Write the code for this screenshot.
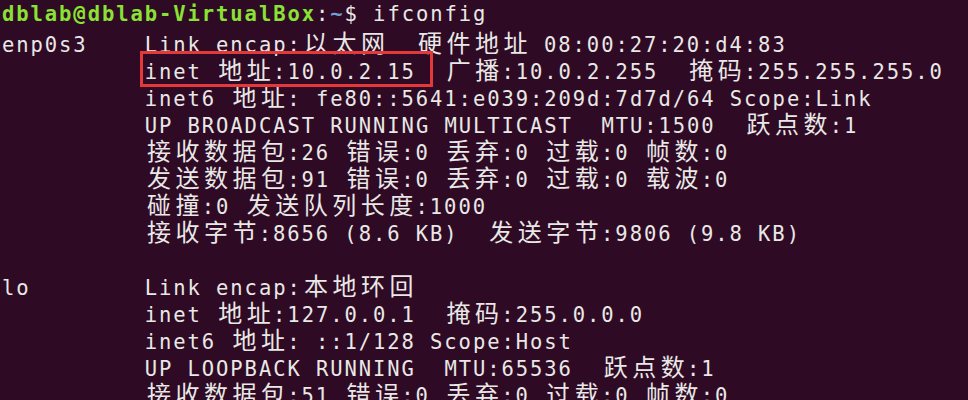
const isWide = (ch) => /[\u2E80-\u9FFF\uFF00-\uFFEF]/.test(ch);

function Text({ text }) {
    const parts = [];
    let buf = '';
    [...text].forEach((ch, i) => {
        if (isWide(ch)) {
            if (buf) {
                parts.push(<span key={'a' + i}>{buf}</span>);
                buf = '';
            }
            parts.push(
                <span
                    key={'w' + i}
                    className="inline-block w-[28.5px] text-center tracking-normal text-[24px] font-['Noto_Sans_CJK_SC',sans-serif]"
                >
                    {ch}
                </span>
            );
        } else {
            buf += ch;
        }
    });
    if (buf) parts.push(<span key="end">{buf}</span>);
    return <>{parts}</>;
}

function Line({ children }) {
    return <div className="h-[27px] leading-[27px] whitespace-pre">{children}</div>;
}

const lines = [
    'enp0s3    Link encap:以太网  硬件地址 08:00:27:20:d4:83',
    null,
    '          inet6 地址: fe80::5641:e039:209d:7d7d/64 Scope:Link',
    '          UP BROADCAST RUNNING MULTICAST  MTU:1500  跃点数:1',
    '          接收数据包:26 错误:0 丢弃:0 过载:0 帧数:0',
    '          发送数据包:91 错误:0 丢弃:0 过载:0 载波:0',
    '          碰撞:0 发送队列长度:1000 ',
    '          接收字节:8656 (8.6 KB)  发送字节:9806 (9.8 KB)',
    '',
    'lo        Link encap:本地环回  ',
    '          inet 地址:127.0.0.1  掩码:255.0.0.0',
    '          inet6 地址: ::1/128 Scope:Host',
    '          UP LOOPBACK RUNNING  MTU:65536  跃点数:1',
    '          接收数据包:51 错误:0 丢弃:0 过载:0 帧数:0',
];

export default function App() {
    return (
        <div className="w-[968px] h-[400px] overflow-hidden bg-[#2f0a24] pt-[1px] pl-[2px] text-[#e8e8e6] text-[20.5px] tracking-[1.93px] font-['DejaVu_Sans_Mono',monospace]">
            <Line>
                <span className="font-bold text-[#8ae234]">dblab@dblab-VirtualBox</span>
                <span>:</span>
                <span className="font-bold text-[#729fcf]">~</span>
                <span>$ ifconfig</span>
            </Line>
            {lines.map((l, i) =>
                l === null ? (
                    <Line key={i}>
                        <Text text="          " />
                        <span className="relative inline-block">
                            <Text text="inet 地址:10.0.2.15" />
                            <span className="absolute -left-[5px] -right-[17px] -top-[4px] -bottom-[1px] border-[3px] border-[#e5383b]" />
                        </span>
                        <Text text="  广播:10.0.2.255  掩码:255.255.255.0" />
                    </Line>
                ) : (
                    <Line key={i}>
                        <Text text={l} />
                    </Line>
                )
            )}
        </div>
    );
}
